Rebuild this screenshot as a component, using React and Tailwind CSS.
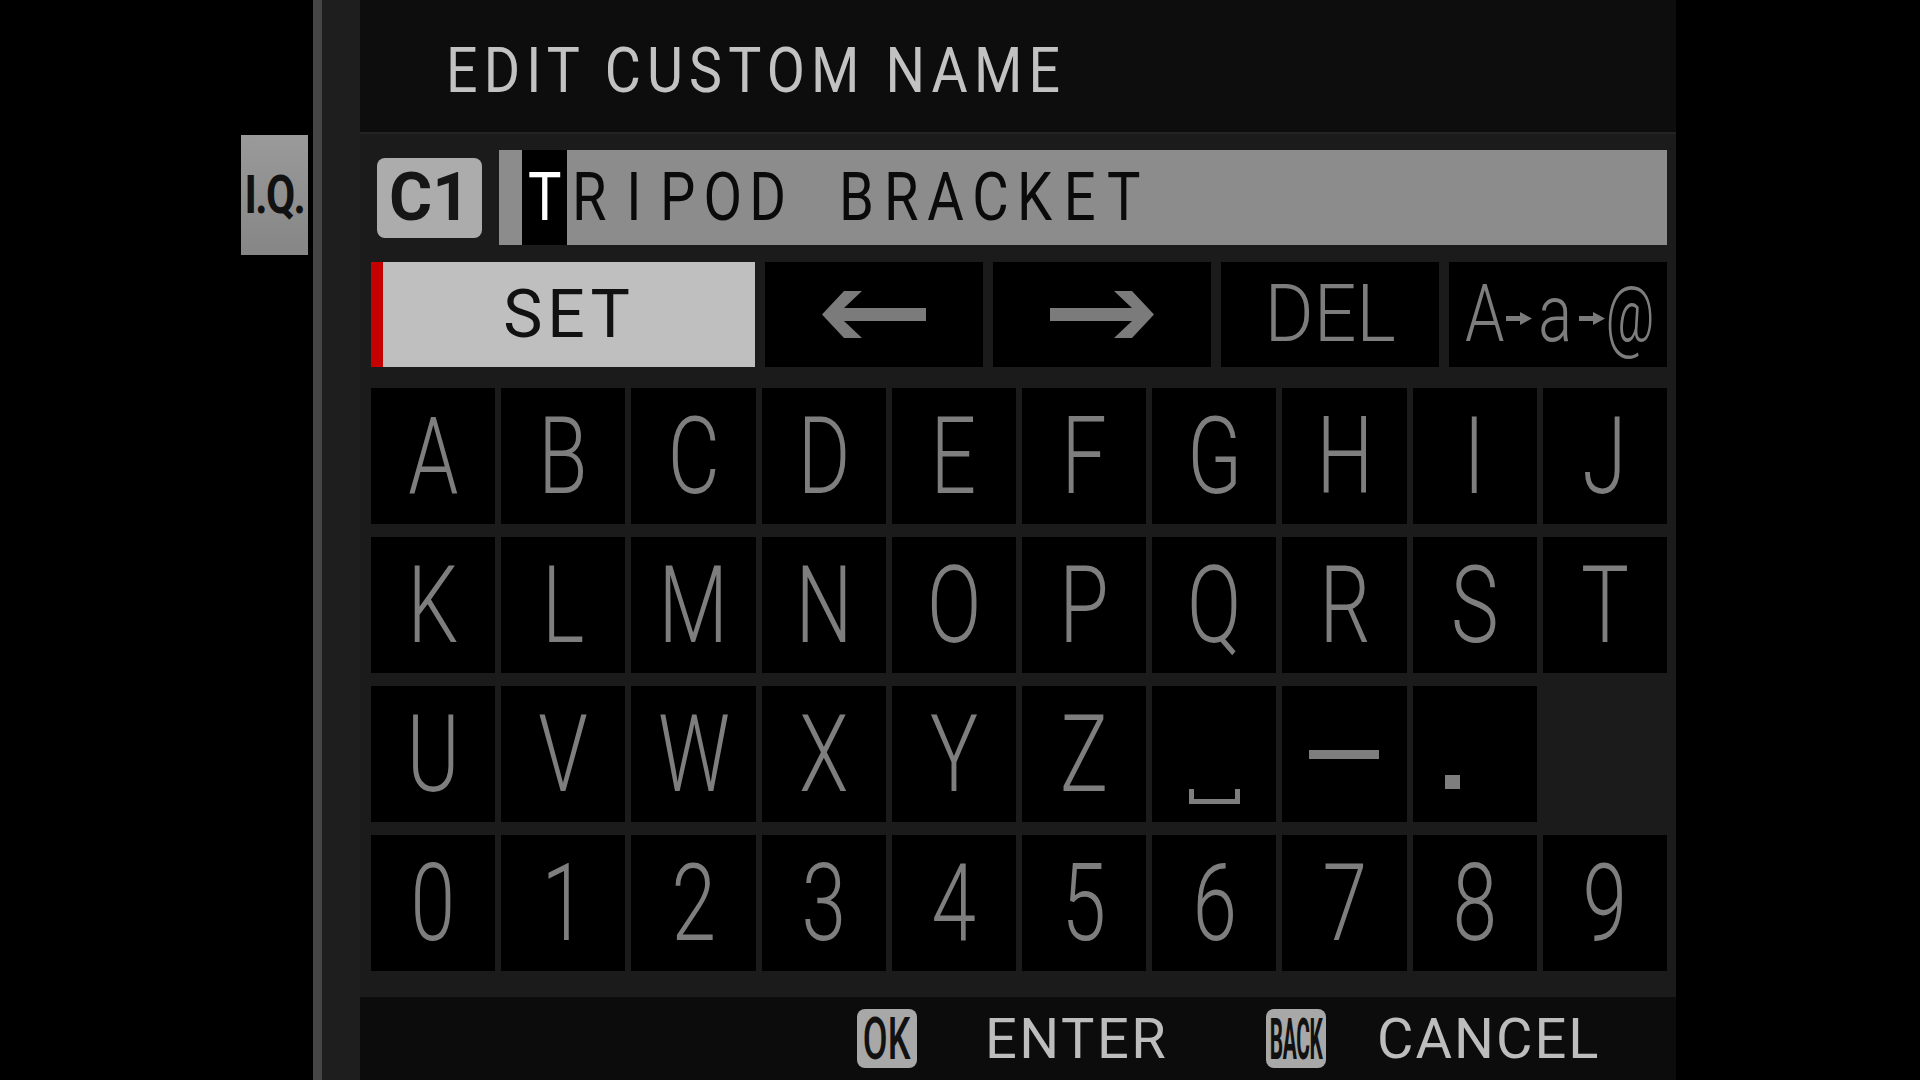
import React from "react";

const rows = [
  ["A", "B", "C", "D", "E", "F", "G", "H", "I", "J"],
  ["K", "L", "M", "N", "O", "P", "Q", "R", "S", "T"],
  ["U", "V", "W", "X", "Y", "Z", "space", "dash", "dot", "empty"],
  ["0", "1", "2", "3", "4", "5", "6", "7", "8", "9"],
];

const name = "TRIPOD BRACKET".split("");

const ArrowLeft = () => (
  <svg width="104" height="47" viewBox="0 0 104 47">
    <polygon
      points="0,23.5 22,0 40,0 22,17 104,17 104,30 22,30 40,47 22,47"
      fill="#7b7b7b"
    />
  </svg>
);

const ArrowRight = () => (
  <svg width="104" height="47" viewBox="0 0 104 47">
    <polygon
      points="104,23.5 82,0 64,0 82,17 0,17 0,30 82,30 64,47 82,47"
      fill="#7b7b7b"
    />
  </svg>
);

const SmallArrow = () => (
  <svg width="26" height="13" viewBox="0 0 26 13">
    <polygon points="0,4 14,4 14,0 26,6.5 14,13 14,9 0,9" fill="#7b7b7b" />
  </svg>
);

const Key = ({ k }) => {
  if (k === "empty") {
    return <div className="h-[136px]" />;
  }
  if (k === "space") {
    return (
      <div className="h-[136px] bg-black flex justify-center items-start pt-[103px]">
        <svg width="51" height="15" viewBox="0 0 51 15">
          <path d="M2.5 0 V12.5 H48.5 V0" fill="none" stroke="#7e7e7e" strokeWidth="5" />
        </svg>
      </div>
    );
  }
  if (k === "dash") {
    return (
      <div className="h-[136px] bg-black flex justify-center items-center">
        <div className="w-[70px] h-[9px] bg-[#7e7e7e]" />
      </div>
    );
  }
  if (k === "dot") {
    return (
      <div className="h-[136px] bg-black flex items-start pt-[89px] pl-[32px]">
        <div className="w-[15px] h-[14px] bg-[#7e7e7e]" />
      </div>
    );
  }
  return (
    <div className="h-[136px] bg-black flex justify-center items-center">
      <span className="inline-block scale-x-[0.75] text-[107px] font-light leading-none text-[#7e7e7e]">
        {k}
      </span>
    </div>
  );
};

export default function App() {
  return (
    <div className="flex h-[1080px] w-[1920px] overflow-hidden bg-black font-['Roboto',sans-serif]">
      {/* left side tab */}
      <div className="w-[313px] flex justify-end pt-[135px] pr-[5px]">
        <div className="w-[67px] h-[120px] bg-gradient-to-b from-[#9a9a9a] to-[#868686] flex items-center justify-center">
          <span className="inline-block scale-x-[0.8] text-[53px] font-bold leading-none tracking-[-2px] text-[#111]">
            I.Q.
          </span>
        </div>
      </div>
      <div className="w-[9px] bg-[#454545]" />
      <div className="w-[38px] bg-[#1e1e1e]" />

      {/* main panel */}
      <div className="w-[1316px] flex flex-col">
        <div className="h-[132px] bg-[#0d0d0d] pl-[86px] pt-[39px]">
          <span className="inline-block origin-left scale-x-[0.88] whitespace-nowrap text-[63px] leading-none tracking-[7px] text-[#c2c2c2]">
            EDIT CUSTOM NAME
          </span>
        </div>

        <div className="h-[865px] bg-[#1b1b1b] border-t-2 border-[#232323] pt-[16px] pl-[11px] pr-[9px]">
          {/* name row */}
          <div className="h-[95px] flex items-stretch">
            <div className="ml-[6px] w-[105px] h-[80px] self-center rounded-lg bg-[#acacac] flex items-center justify-center">
              <span className="text-[66px] font-bold leading-none text-[#161616]">C1</span>
            </div>
            <div className="ml-[17px] flex-1 bg-[#8c8c8c] pl-[23px] flex">
              {name.map((c, i) => (
                <div
                  key={i}
                  className={
                    i === 0
                      ? "w-[44.6px] bg-black flex items-center justify-center"
                      : "w-[44.6px] flex items-center justify-center"
                  }
                >
                  <span
                    className={
                      i === 0
                        ? "inline-block scale-x-[0.85] text-[66px] leading-none text-white"
                        : "inline-block scale-x-[0.85] text-[66px] leading-none text-[#0a0a0a]"
                    }
                  >
                    {c === " " ? "\u00a0" : c}
                  </span>
                </div>
              ))}
            </div>
          </div>

          {/* action row */}
          <div className="mt-[17px] h-[105px] flex gap-[10px]">
            <div className="w-[384px] bg-[#bfbfbf] border-l-[12px] border-[#c40000] flex items-center justify-center">
              <span className="text-[66px] leading-none tracking-[5px] text-[#111]">SET</span>
            </div>
            <div className="flex-1 bg-black flex items-center justify-center">
              <ArrowLeft />
            </div>
            <div className="flex-1 bg-black flex items-center justify-center">
              <ArrowRight />
            </div>
            <div className="flex-1 bg-black flex items-center justify-center">
              <span className="inline-block scale-x-[0.95] text-[79px] font-light leading-none text-[#7d7d7d]">
                DEL
              </span>
            </div>
            <div className="flex-1 bg-black flex items-center justify-center text-[79px] font-light leading-none text-[#7d7d7d]">
              <div className="w-[39px] flex justify-center">
                <span className="inline-block scale-x-[0.8]">A</span>
              </div>
              <div className="ml-[2px] flex pt-[8px]">
                <SmallArrow />
              </div>
              <div className="ml-[9px] w-[28px] flex justify-center">
                <span className="inline-block scale-x-[0.8]">a</span>
              </div>
              <div className="ml-[10px] flex pt-[8px]">
                <SmallArrow />
              </div>
              <div className="ml-[5px] w-[41px] flex justify-center">
                <span className="inline-block scale-x-[0.68]">@</span>
              </div>
            </div>
          </div>

          {/* key grid */}
          <div className="mt-[21px] grid grid-cols-10 gap-x-[6px] gap-y-[13px]">
            {rows.flat().map((k, i) => (
              <Key key={i} k={k} />
            ))}
          </div>
        </div>

        {/* footer */}
        <div className="flex-1 bg-[#0c0c0c] flex items-center pl-[497px]">
          <div className="w-[60px] h-[59px] rounded-lg bg-[#a8a8a8] flex items-center justify-center">
            <span className="inline-block scale-x-[0.6] text-[60px] font-medium leading-none text-[#111]">
              OK
            </span>
          </div>
          <div className="w-[349px] pl-[68px]">
            <span className="text-[56px] leading-none tracking-[2.5px] text-[#bdbdbd]">ENTER</span>
          </div>
          <div className="w-[60px] h-[59px] rounded-lg bg-[#a8a8a8] flex items-center justify-center">
            <span className="inline-block scale-x-[0.36] text-[58px] font-bold leading-none tracking-[-1px] text-[#111]">
              BACK
            </span>
          </div>
          <div className="pl-[51px]">
            <span className="text-[56px] leading-none tracking-[2px] text-[#bdbdbd]">CANCEL</span>
          </div>
        </div>
      </div>
    </div>
  );
}
